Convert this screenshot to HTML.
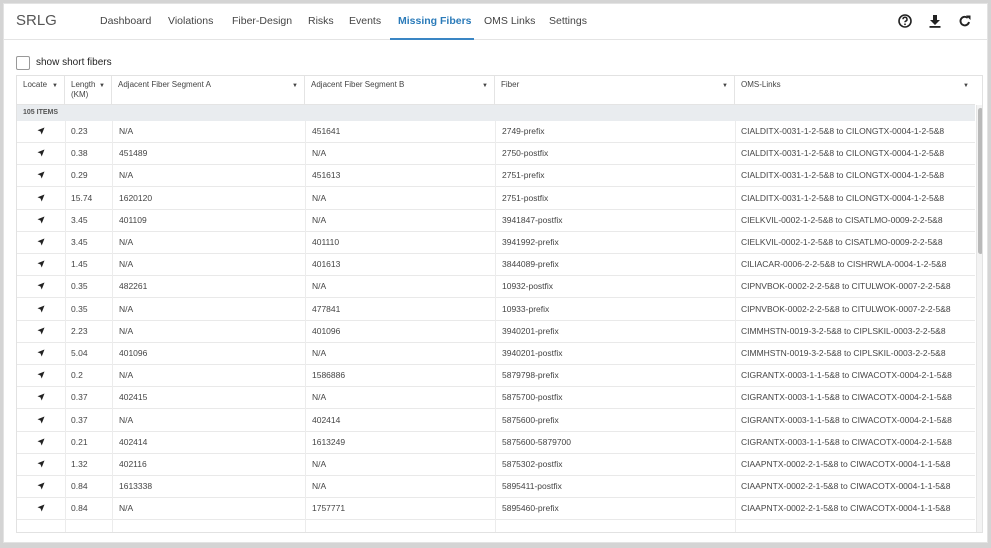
<!DOCTYPE html>
<html><head><meta charset="utf-8"><style>
*{margin:0;padding:0;box-sizing:border-box}
html,body{width:991px;height:548px;overflow:hidden}
body{background:#d4d4d4;font-family:"Liberation Sans",sans-serif;color:#444;position:relative}
#frame{position:absolute;left:3px;top:3px;width:985px;height:540px;background:#fff;border:1px solid #e3e3e3;overflow:hidden}
#nav{position:absolute;left:0;top:0;width:983px;height:36px;border-bottom:1px solid #e4e4e4}
.logo{position:absolute;left:12px;top:8px;font-size:15px;color:#555}
.tab{position:absolute;top:11px;font-size:10.5px;color:#444}
.tab.act{color:#2b7bb9;font-weight:bold}
.ul{position:absolute;left:386px;top:34px;width:84px;height:2px;background:#3a86c4}
.cb{position:absolute;left:12px;top:52px;width:14px;height:14px;border:1px solid #999;border-radius:2px;background:#fff}
.cbl{position:absolute;left:32px;top:53px;font-size:10px;color:#222}
#tbl{position:absolute;left:12px;top:71px;width:967px;height:458px;border:1px solid #e2e2e2;overflow:hidden}
.hd{position:absolute;top:0;height:29px;font-size:8px;color:#444;padding:4px 0 0 6px;line-height:10px;border-right:1px solid #e4e4e4}
.hd i{position:absolute;right:6px;top:5px;font-style:normal;font-size:6px}
.grp{position:absolute;left:0;top:29px;width:958px;height:16px;background:#e9ecef;font-size:7px;font-weight:bold;color:#555;padding:4px 0 0 6px}
.row{position:absolute;left:0;width:958px;height:22px;border-bottom:1px solid #e9e9e9;font-size:8.5px;color:#444}
.row span{position:absolute;top:5px}
.vl{position:absolute;top:45px;width:1px;height:412px;background:#ececec}
.sb{position:absolute;left:959px;top:29px;width:7px;height:428px;background:#f3f3f3;border-left:1px solid #e6e6e6}
.th{position:absolute;left:961px;top:32px;width:5px;height:146px;background:#b9b9b9;border-radius:3px}
</style></head><body>
<div id="frame">
<div id="nav">
<div class="logo">SRLG</div>
<div class="tab" style="left:96px">Dashboard</div>
<div class="tab" style="left:164px">Violations</div>
<div class="tab" style="left:228px">Fiber-Design</div>
<div class="tab" style="left:304px">Risks</div>
<div class="tab" style="left:345px">Events</div>
<div class="tab act" style="left:394px">Missing Fibers</div>
<div class="tab" style="left:480px">OMS Links</div>
<div class="tab" style="left:545px">Settings</div>
<div class="ul"></div>
<svg style="position:absolute;left:893px;top:9px" width="16" height="16" viewBox="0 0 16 16"><circle cx="8" cy="8" r="6" fill="none" stroke="#222" stroke-width="1.6"/><path d="M6 6.3a2 2 0 1 1 2.6 1.9c-.5.2-.6.5-.6 1.1" fill="none" stroke="#222" stroke-width="1.5"/><circle cx="8" cy="11.3" r=".9" fill="#222"/></svg>
<svg style="position:absolute;left:924px;top:9px" width="14" height="16" viewBox="0 0 14 16"><path d="M5 2h4v5h3l-5 5-5-5h3z" fill="#222"/><rect x="1.5" y="13" width="11" height="1.8" fill="#222"/></svg>
<svg style="position:absolute;left:954px;top:9px" width="14" height="16" viewBox="0 0 14 16"><path d="M11 9a4.3 4.3 0 1 1-1.3-4.1" fill="none" stroke="#222" stroke-width="1.9"/><path d="M8 2.5h4.5V7z" fill="#222"/></svg>
</div>
<div class="cb"></div><div class="cbl">show short fibers</div>
<div id="tbl">
<div class="hd" style="left:0;width:48px">Locate<i>▼</i></div>
<div class="hd" style="left:48px;width:47px">Length<br>(KM)<i>▼</i></div>
<div class="hd" style="left:95px;width:193px">Adjacent Fiber Segment A<i>▼</i></div>
<div class="hd" style="left:288px;width:190px">Adjacent Fiber Segment B<i>▼</i></div>
<div class="hd" style="left:478px;width:240px">Fiber<i>▼</i></div>
<div class="hd" style="left:718px;width:240px;border-right:none">OMS-Links<i>▼</i></div>
<div class="grp">105 ITEMS</div>
<div id="rows"></div>
<div class="vl" style="left:48px"></div>
<div class="vl" style="left:95px"></div>
<div class="vl" style="left:288px"></div>
<div class="vl" style="left:478px"></div>
<div class="vl" style="left:718px"></div>
<div style="position:absolute;left:0;top:28px;width:958px;height:1px;background:#e4e4e4"></div>
<div class="sb"></div><div class="th"></div>
</div>
</div>
<script>
var d=[["0.23","N/A","451641","2749-prefix","CIALDITX-0031-1-2-5&8 to CILONGTX-0004-1-2-5&8"],
["0.38","451489","N/A","2750-postfix","CIALDITX-0031-1-2-5&8 to CILONGTX-0004-1-2-5&8"],
["0.29","N/A","451613","2751-prefix","CIALDITX-0031-1-2-5&8 to CILONGTX-0004-1-2-5&8"],
["15.74","1620120","N/A","2751-postfix","CIALDITX-0031-1-2-5&8 to CILONGTX-0004-1-2-5&8"],
["3.45","401109","N/A","3941847-postfix","CIELKVIL-0002-1-2-5&8 to CISATLMO-0009-2-2-5&8"],
["3.45","N/A","401110","3941992-prefix","CIELKVIL-0002-1-2-5&8 to CISATLMO-0009-2-2-5&8"],
["1.45","N/A","401613","3844089-prefix","CILIACAR-0006-2-2-5&8 to CISHRWLA-0004-1-2-5&8"],
["0.35","482261","N/A","10932-postfix","CIPNVBOK-0002-2-2-5&8 to CITULWOK-0007-2-2-5&8"],
["0.35","N/A","477841","10933-prefix","CIPNVBOK-0002-2-2-5&8 to CITULWOK-0007-2-2-5&8"],
["2.23","N/A","401096","3940201-prefix","CIMMHSTN-0019-3-2-5&8 to CIPLSKIL-0003-2-2-5&8"],
["5.04","401096","N/A","3940201-postfix","CIMMHSTN-0019-3-2-5&8 to CIPLSKIL-0003-2-2-5&8"],
["0.2","N/A","1586886","5879798-prefix","CIGRANTX-0003-1-1-5&8 to CIWACOTX-0004-2-1-5&8"],
["0.37","402415","N/A","5875700-postfix","CIGRANTX-0003-1-1-5&8 to CIWACOTX-0004-2-1-5&8"],
["0.37","N/A","402414","5875600-prefix","CIGRANTX-0003-1-1-5&8 to CIWACOTX-0004-2-1-5&8"],
["0.21","402414","1613249","5875600-5879700","CIGRANTX-0003-1-1-5&8 to CIWACOTX-0004-2-1-5&8"],
["1.32","402116","N/A","5875302-postfix","CIAAPNTX-0002-2-1-5&8 to CIWACOTX-0004-1-1-5&8"],
["0.84","1613338","N/A","5895411-postfix","CIAAPNTX-0002-2-1-5&8 to CIWACOTX-0004-1-1-5&8"],
["0.84","N/A","1757771","5895460-prefix","CIAAPNTX-0002-2-1-5&8 to CIWACOTX-0004-1-1-5&8"]];
var ic='<svg style="position:absolute;left:20px;top:6px" width="8" height="8" viewBox="0 0 8 8"><path d="M7.5 .5L.5 3.3l3 1.2 1.2 3z" fill="#222"/></svg>';
var h="";d.forEach(function(r,i){h+='<div class="row" style="top:'+(45+i*22.2)+'px">'+ic+'<span style="left:54px">'+r[0]+'</span><span style="left:102px">'+r[1]+'</span><span style="left:295px">'+r[2]+'</span><span style="left:485px">'+r[3]+'</span><span style="left:724px">'+r[4].replace(/&/g,'&amp;')+'</span></div>';});
document.getElementById("rows").innerHTML=h;
</script>
</body></html>
